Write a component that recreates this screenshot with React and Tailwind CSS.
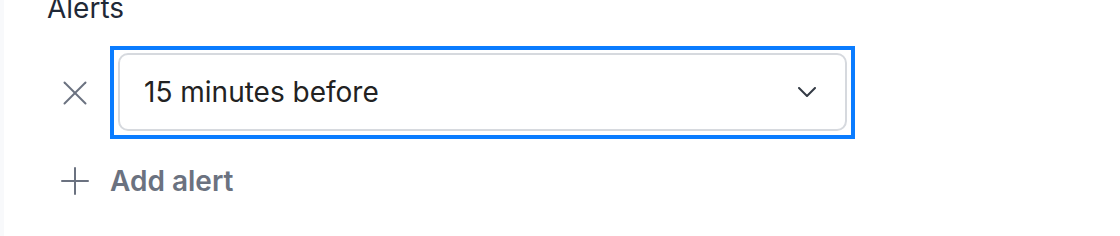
import React from "react";

export default function App() {
  return (
    <div
      className="flex w-[1120px] h-[236px] bg-white overflow-hidden"
      style={{ fontFamily: "Inter, 'Noto Sans', sans-serif" }}
    >
      <div className="w-[4px] h-full bg-[#f8f9fb] shrink-0" />
      <div className="flex flex-col pl-[43px]">
        <div className="text-[28px] leading-[36px] text-[#1f2937] font-normal -mt-[10px]">
          Alerts
        </div>
        <div className="flex items-center mt-[20px]">
          <button className="ml-[16px] w-[24px] h-[24px] flex items-center justify-center text-[#6b7280]">
            <svg width="24" height="24" viewBox="0 0 24 24" fill="none" stroke="currentColor" strokeWidth="2" strokeLinecap="round">
              <line x1="1.5" y1="1.5" x2="22.5" y2="22.5" />
              <line x1="22.5" y1="1.5" x2="1.5" y2="22.5" />
            </svg>
          </button>
          <div className="ml-[23px] border-4 border-[#0a7cff] pt-[3px] pb-[4px] px-[4px]">
            <div className="w-[729px] h-[78px] border-2 border-[#d6d9de] rounded-[10px] bg-white flex items-center justify-between pl-[24px] pr-[29px]">
              <span className="text-[28px] text-[#222222]">15 minutes before</span>
              <svg width="18" height="10" viewBox="0 0 18 10" fill="none" stroke="#333a44" strokeWidth="2" strokeLinecap="round" strokeLinejoin="round">
                <polyline points="1,1 9,9 17,1" />
              </svg>
            </div>
          </div>
        </div>
        <button className="flex items-center mt-[18px] h-[48px] text-[#6b7280]">
          <svg className="ml-[14px]" width="28" height="28" viewBox="0 0 28 28" fill="none" stroke="currentColor" strokeWidth="2" strokeLinecap="round">
            <line x1="14" y1="1" x2="14" y2="27" />
            <line x1="1" y1="14" x2="27" y2="14" />
          </svg>
          <span className="ml-[21px] text-[28px] font-semibold">Add alert</span>
        </button>
      </div>
    </div>
  );
}
